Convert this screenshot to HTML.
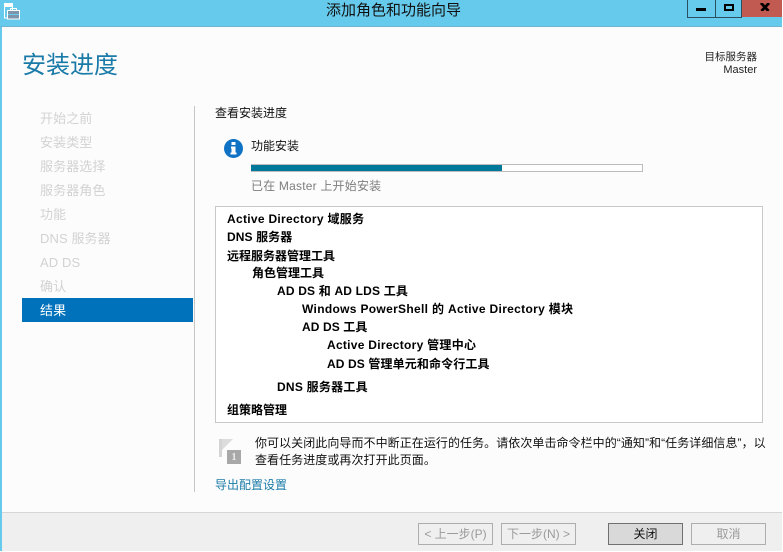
<!DOCTYPE html>
<html lang="zh"><head><meta charset="utf-8"><style>
html,body{margin:0;padding:0}
body{width:783px;height:552px;position:relative;overflow:hidden;background:#fcfcfc;font:12px/16px "Liberation Sans","Noto Sans CJK SC",sans-serif;color:#111}
.a{position:absolute;white-space:nowrap}
.nav{left:40px;color:#d2d2d2;font-size:13px;line-height:18px;letter-spacing:.1px}
.t{font-weight:bold;font-size:12px;line-height:16px;color:#000}
.btn{position:absolute;top:523px;width:73px;height:20px;border:1px solid #adadad;text-align:center;font-size:12px;line-height:20px;color:#9a9a9a;background:#efefef}
</style></head><body>
<div class="a" style="left:0;top:0;width:783px;height:26px;background:#66caec;border-bottom:1px solid #6fb4d0"></div>
<div class="a" style="left:0;top:27px;width:2px;height:525px;background:#66caec"></div>
<svg class="a" style="left:4px;top:3px" width="17" height="17" viewBox="0 0 17 17" fill="none" stroke="#fff"><rect x="0.500" y="0.500" width="8" height="14.500"/><rect x="1" y="1" width="7" height="3" fill="#fff" stroke="none"/><rect x="3.500" y="7.500" width="12" height="8.500" fill="#7f95aa"/><path d="M6.500 7V5.500h6V7"/><path d="M4 11.500h11" stroke="#66caec"/></svg>
<div class="a" style="left:0;top:1px;width:783px;text-align:center;font-size:15px;line-height:20px;color:#111;padding-left:4px;box-sizing:border-box">添加角色和功能向导</div>
<div class="a" style="left:687px;top:0;width:29px;height:18px;border:solid #2a4f60;border-width:0 1px 1px 1px;box-sizing:border-box"></div>
<div class="a" style="left:696px;top:8px;width:10px;height:3px;background:#000"></div>
<div class="a" style="left:715px;top:0;width:27px;height:18px;border:solid #2a4f60;border-width:0 1px 1px 0;box-sizing:border-box"></div>
<div class="a" style="left:724px;top:4px;width:10px;height:7px;border:2px solid #000;box-sizing:border-box"></div>
<div class="a" style="left:742px;top:0;width:41px;height:17px;background:#c15a50"></div>
<svg class="a" style="left:760px;top:3px" width="10" height="8" viewBox="0 0 10 8"><path d="M1 0L8.500 8M9 0L1.500 8" stroke="#000" stroke-width="2.800"/></svg>

<div class="a" style="left:22px;top:50px;font-size:24px;line-height:32px;color:#1a7ba8">安装进度</div>
<div class="a" style="right:26px;top:51px;text-align:right;font-size:10.500px;line-height:13px;color:#222">目标服务器<br><span style="font-size:11px">Master</span></div>

<div class="a" style="left:194px;top:106px;width:1px;height:386px;background:#c6c6c6"></div>
<div class="a nav" style="top:110px">开始之前</div>
<div class="a nav" style="top:134px">安装类型</div>
<div class="a nav" style="top:158px">服务器选择</div>
<div class="a nav" style="top:182px">服务器角色</div>
<div class="a nav" style="top:206px">功能</div>
<div class="a nav" style="top:230px">DNS 服务器</div>
<div class="a nav" style="top:254px">AD DS</div>
<div class="a nav" style="top:278px">确认</div>
<div class="a" style="left:22px;top:298px;width:171px;height:24px;background:#0072bc"></div>
<div class="a nav" style="top:302px;color:#fff">结果</div>

<div class="a" style="left:215px;top:105px">查看安装进度</div>
<svg class="a" style="left:224px;top:139px" width="19" height="19" viewBox="0 0 19 19"><circle cx="9.500" cy="9.500" r="9.500" fill="#0f72c4"/><rect x="7.500" y="3" width="4" height="3" fill="#fff"/><path d="M7 7.500h4.500v6h1v2h-6v-2h1v-4h-.5z" fill="#fff"/></svg>
<div class="a" style="left:251px;top:138px">功能安装</div>
<div class="a" style="left:251px;top:164px;width:392px;height:8px;border:1px solid #bcbcbc;box-sizing:border-box;background:#fff"></div>
<div class="a" style="left:251px;top:165px;width:251px;height:6px;background:#00789a"></div>
<div class="a" style="left:251px;top:178px;color:#7d7d7d;letter-spacing:.2px">已在 Master 上开始安装</div>

<div class="a" style="left:215px;top:206px;width:548px;height:217px;background:#fff;border:1px solid #c8c8c8;box-sizing:border-box"></div>
<div class="a t" style="left:227px;top:211px;letter-spacing:.3px">Active Directory 域服务</div>
<div class="a t" style="left:227px;top:229px;letter-spacing:.1px">DNS 服务器</div>
<div class="a t" style="left:227px;top:248px">远程服务器管理工具</div>
<div class="a t" style="left:252px;top:265px">角色管理工具</div>
<div class="a t" style="left:277px;top:283px;letter-spacing:.18px">AD DS 和 AD LDS 工具</div>
<div class="a t" style="left:302px;top:301px;letter-spacing:.32px">Windows PowerShell 的 Active Directory 模块</div>
<div class="a t" style="left:302px;top:319px;letter-spacing:.1px">AD DS 工具</div>
<div class="a t" style="left:327px;top:337px;letter-spacing:.28px">Active Directory 管理中心</div>
<div class="a t" style="left:327px;top:356px;letter-spacing:.12px">AD DS 管理单元和命令行工具</div>
<div class="a t" style="left:277px;top:379px;letter-spacing:.25px">DNS 服务器工具</div>
<div class="a t" style="left:227px;top:402px">组策略管理</div>

<svg class="a" style="left:219px;top:438px" width="23" height="28" viewBox="0 0 23 28"><rect x="0" y="1" width="3" height="18" fill="#d4d4d4"/><path d="M3 1H14L3 12z" fill="#dcdcdc"/><rect x="8" y="12" width="14" height="14" fill="#a8a8a8"/></svg>
<div class="a" style="left:227px;top:450px;width:14px;text-align:center;color:#e8e8e8;font:bold 11px/14px 'Liberation Serif',serif">1</div>
<div class="a" style="left:255px;top:435px;line-height:17px;font-size:12px;letter-spacing:.06px">你可以关闭此向导而不中断正在运行的任务。请依次单击命令栏中的“通知”和“任务详细信息”，以<br>查看任务进度或再次打开此页面。</div>
<div class="a" style="left:215px;top:477px;color:#1a7ba8">导出配置设置</div>

<div class="a" style="left:2px;top:512px;width:781px;height:40px;background:#efefef;border-top:1px solid #d6d6d6;box-sizing:border-box"></div>
<div class="btn" style="left:418px">&lt; 上一步(P)</div>
<div class="btn" style="left:501px">下一步(N) &gt;</div>
<div class="btn" style="left:608px;background:#d9d9d9;border-color:#707070;color:#111">关闭</div>
<div class="btn" style="left:691px">取消</div>
<div class="a" style="left:782px;top:0;width:1px;height:552px;background:#fff"></div>
<div class="a" style="left:0;top:551px;width:783px;height:1px;background:#fff"></div>
</body></html>
